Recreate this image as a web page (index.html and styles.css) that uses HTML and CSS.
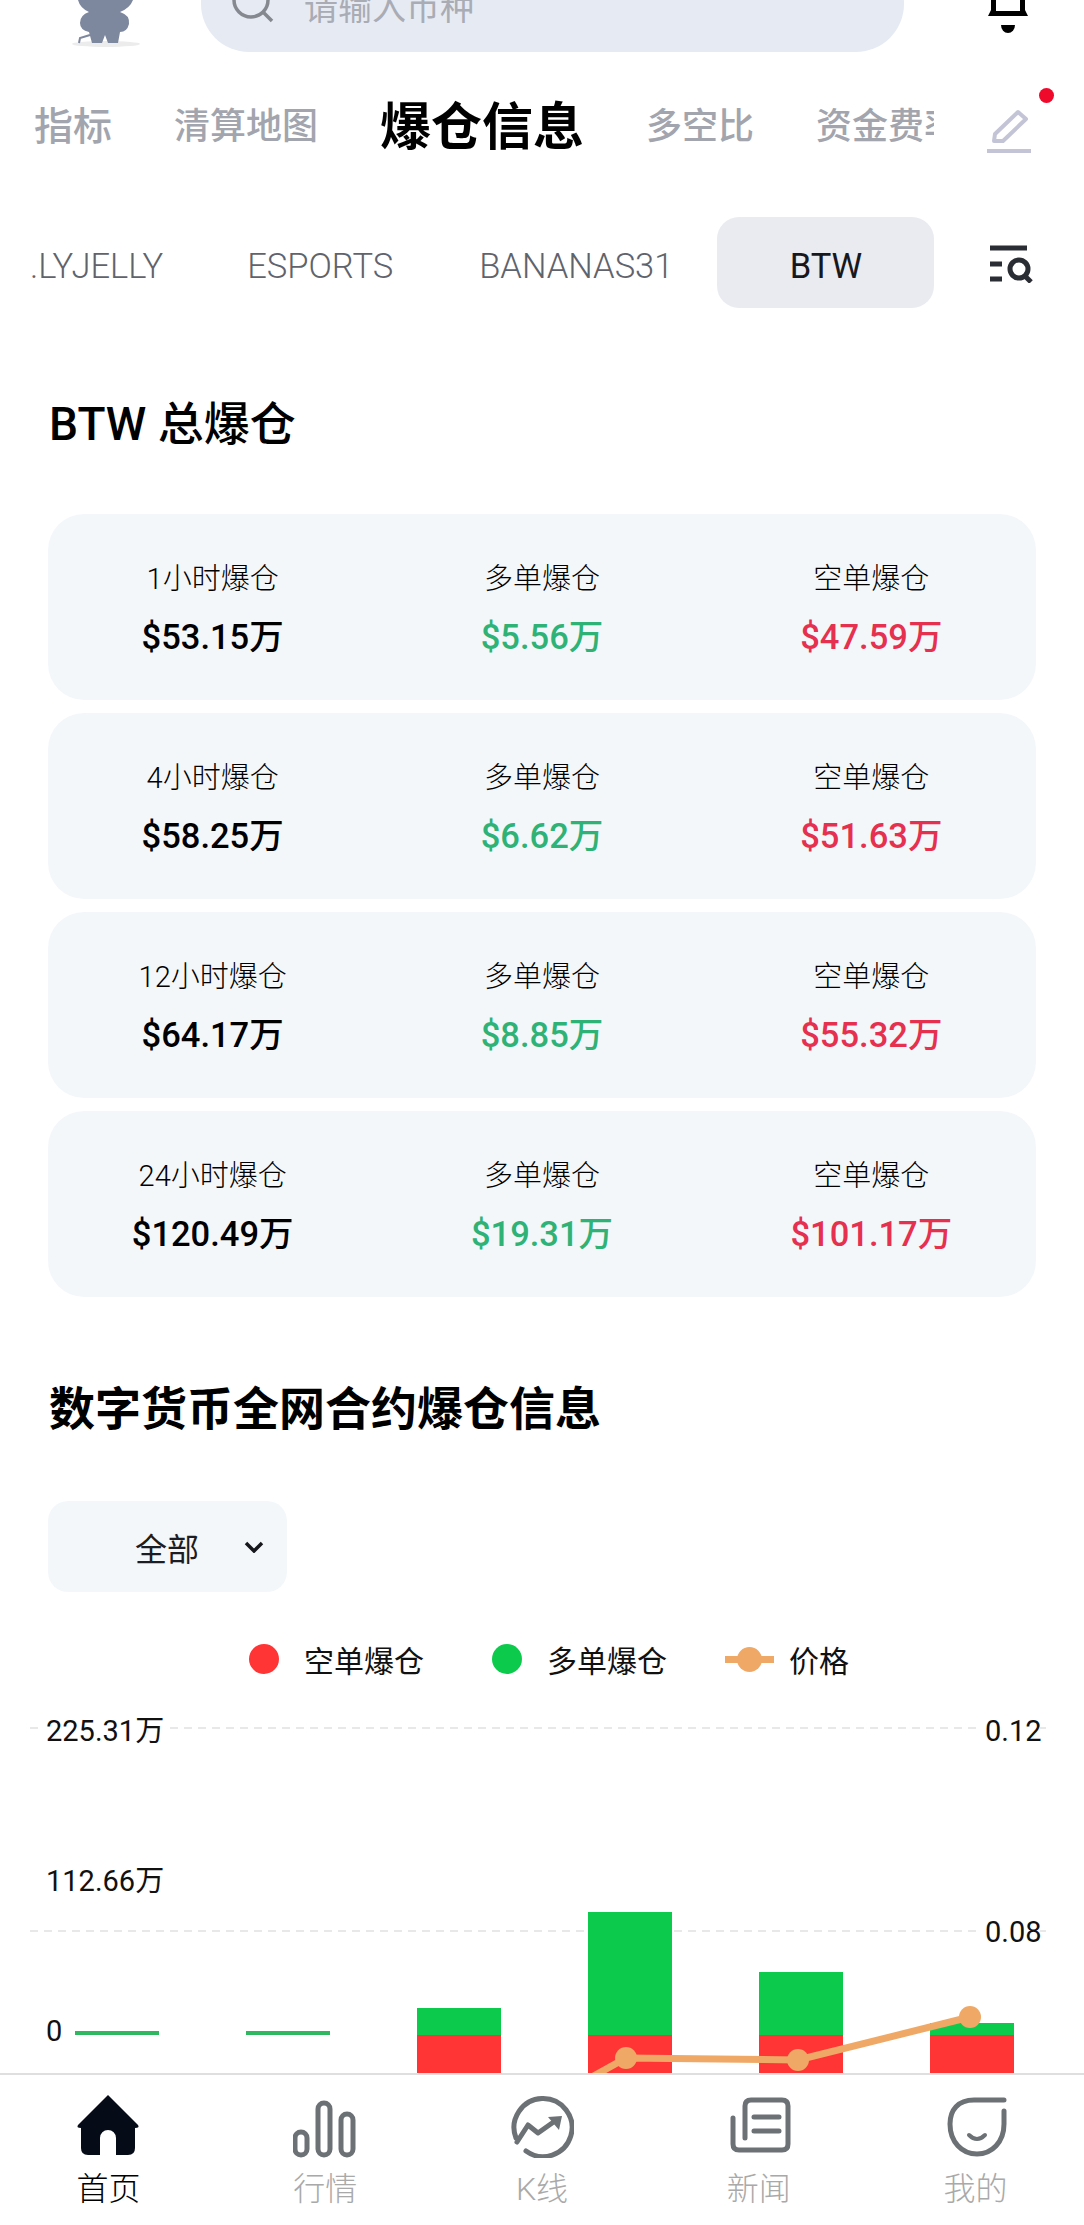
FILE: index.html
```html
<!DOCTYPE html>
<html lang="zh-CN">
<head>
    <meta charset="UTF-8">
    <meta name="viewport" content="width=device-width, initial-scale=1.0">
    <title>爆仓信息</title>
    <link rel="stylesheet" href="styles.css">
</head>
<body>
    <div class="page">
        <main class="content">
            <header class="top-bar">
                <svg class="mascot" width="84" height="52" viewBox="0 0 84 52">
                    <ellipse class="mascot-shadow" cx="40" cy="44" rx="34" ry="3"/>
                    <path class="mascot-body" d="M12 0H67Q64 8 54 12Q64 15 63 24Q61 32 54 32L52 43H42L39 35L36 43H26L23 32Q14 30 14 23Q14 15 23 12Q14 8 12 0Z"/>
                    <path class="mascot-tail" d="M24 35L14 38L13 43"/>
                </svg>
                <div class="search">
                    <svg class="search-icon" width="44" height="44" viewBox="0 0 44 44">
                        <circle cx="20" cy="20" r="17"/>
                        <path d="M32 32L41 41"/>
                    </svg>
                    <span class="search-text">请输入币种</span>
                </div>
                <svg class="bell" width="46" height="34" viewBox="0 0 46 34">
                    <path d="M6 0V10L3 16H43L40 10V0H35V11H11V0Z"/>
                    <path d="M16 25H30A7 8 0 0 1 16 25Z"/>
                </svg>
            </header>

            <nav class="tabs">
                <div class="tab-list">
                    <a class="tab">指标</a>
                    <a class="tab">清算地图</a>
                    <a class="tab tab-on">爆仓信息</a>
                    <a class="tab">多空比</a>
                    <a class="tab">资金费率</a>
                </div>
                <div class="pen">
                    <svg width="46" height="46" viewBox="0 0 46 46">
                        <path class="pen-body" d="M8 33L9 26L32 4L40 11L17 33Z"/>
                        <path class="pen-line" d="M1 43H45"/>
                    </svg>
                    <span class="red-dot"></span>
                </div>
            </nav>

            <div class="symbols">
                <div class="symbol-list">
                    <a class="symbol">.LYJELLY</a>
                    <a class="symbol">ESPORTS</a>
                    <a class="symbol">BANANAS31</a>
                    <a class="symbol symbol-on">BTW</a>
                </div>
                <svg class="filter" width="44" height="38" viewBox="0 0 44 38">
                    <path class="filter-line" d="M0 3H37M0 19H12M0 34H12"/>
                    <circle class="filter-lens" cx="29" cy="24" r="9"/>
                    <path class="filter-lens" d="M35 31L41 37"/>
                </svg>
            </div>

            <h2 class="title title-first">BTW 总爆仓</h2>

            <section class="cards">
                <div class="card">
                    <div class="cell"><span class="label">1小时爆仓</span><span class="value">$53.15万</span></div>
                    <div class="cell"><span class="label">多单爆仓</span><span class="value green">$5.56万</span></div>
                    <div class="cell"><span class="label">空单爆仓</span><span class="value red">$47.59万</span></div>
                </div>
                <div class="card">
                    <div class="cell"><span class="label">4小时爆仓</span><span class="value">$58.25万</span></div>
                    <div class="cell"><span class="label">多单爆仓</span><span class="value green">$6.62万</span></div>
                    <div class="cell"><span class="label">空单爆仓</span><span class="value red">$51.63万</span></div>
                </div>
                <div class="card">
                    <div class="cell"><span class="label">12小时爆仓</span><span class="value">$64.17万</span></div>
                    <div class="cell"><span class="label">多单爆仓</span><span class="value green">$8.85万</span></div>
                    <div class="cell"><span class="label">空单爆仓</span><span class="value red">$55.32万</span></div>
                </div>
                <div class="card">
                    <div class="cell"><span class="label">24小时爆仓</span><span class="value">$120.49万</span></div>
                    <div class="cell"><span class="label">多单爆仓</span><span class="value green">$19.31万</span></div>
                    <div class="cell"><span class="label">空单爆仓</span><span class="value red">$101.17万</span></div>
                </div>
            </section>

            <h2 class="title title-second">数字货币全网合约爆仓信息</h2>

            <div class="dropdown">
                <span class="dropdown-text">全部</span>
                <svg width="20" height="12" viewBox="0 0 20 12"><path d="M2 2L10 10L18 2"/></svg>
            </div>

            <div class="legend">
                <span class="legend-item"><i class="dot dot-red"></i>空单爆仓</span>
                <span class="legend-item"><i class="dot dot-green"></i>多单爆仓</span>
                <span class="legend-item legend-price"><i class="price-key"></i>价格</span>
            </div>

            <svg class="chart" width="1084" height="373" viewBox="0 1700 1084 373">
                <path class="grid" d="M30 1728H1052M30 1931H1052"/>

                <rect class="zero" x="75" y="2031" width="84" height="4"/>
                <rect class="zero" x="246" y="2031" width="84" height="4"/>

                <rect class="bar-red" x="417" y="2035" width="84" height="40"/>
                <rect class="bar-green" x="417" y="2008" width="84" height="27"/>
                <rect class="bar-red" x="588" y="2035" width="84" height="40"/>
                <rect class="bar-green" x="588" y="1912" width="84" height="123"/>
                <rect class="bar-red" x="759" y="2035" width="84" height="40"/>
                <rect class="bar-green" x="759" y="1972" width="84" height="63"/>
                <rect class="bar-red" x="930" y="2035" width="84" height="40"/>
                <rect class="bar-green" x="930" y="2023" width="84" height="12"/>

                <path class="price-line" d="M590 2078L626 2058L798 2060L970 2017"/>
                <circle class="price-dot" cx="626" cy="2058" r="11"/>
                <circle class="price-dot" cx="798" cy="2060" r="11"/>
                <circle class="price-dot" cx="970" cy="2017" r="11"/>

                <rect class="label-back" x="44" y="1712" width="122" height="34"/>
                <rect class="label-back" x="982" y="1712" width="58" height="34"/>
                <rect class="label-back" x="982" y="1914" width="58" height="36"/>
                <text class="axis" x="46" y="1741">225.31万</text>
                <text class="axis" x="46" y="1891">112.66万</text>
                <text class="axis" x="46" y="2041">0</text>
                <text class="axis" x="985" y="1741">0.12</text>
                <text class="axis" x="985" y="1942">0.08</text>
            </svg>
        </main>

        <footer class="bottom-nav">
            <a class="nav-item nav-on">
                <svg width="64" height="64" viewBox="0 0 64 64">
                    <path class="home" d="M32 1L62 31Q64 34 59 34V54Q59 61 52 61H40V44A8 8 0 0 0 24 44V61H12Q5 61 5 54V34Q0 34 2 31Z"/>
                </svg>
                <span>首页</span>
            </a>
            <a class="nav-item">
                <svg width="64" height="64" viewBox="0 0 64 64">
                    <rect class="stroke" x="2" y="38" width="12" height="23" rx="6"/>
                    <rect class="stroke" x="25" y="9" width="12" height="52" rx="6"/>
                    <rect class="stroke" x="48" y="20" width="12" height="41" rx="6"/>
                </svg>
                <span>行情</span>
            </a>
            <a class="nav-item">
                <svg width="64" height="64" viewBox="0 0 64 64">
                    <path class="stroke" d="M6 44A29 29 0 1 1 16 57"/>
                    <path class="stroke" d="M7 48L18 31L28 39L45 27"/>
                    <path class="fill" d="M38 23L52 22L49 36Z"/>
                </svg>
                <span>K线</span>
            </a>
            <a class="nav-item">
                <svg width="64" height="64" viewBox="0 0 64 64">
                    <path class="stroke" d="M6 24V50Q6 56 12 56H55Q61 56 61 50V12Q61 6 55 6H24Q18 6 18 12V44"/>
                    <path class="stroke" d="M27 23H52M27 37H52"/>
                </svg>
                <span>新闻</span>
            </a>
            <a class="nav-item">
                <svg width="64" height="64" viewBox="0 0 64 64">
                    <path class="stroke" d="M60 6H30C14 6 6 16 6 30C6 48 18 60 33 60C48 60 60 48 60 30V17"/>
                    <path class="smile" d="M25 41Q33 49 41 41"/>
                </svg>
                <span>我的</span>
            </a>
        </footer>
    </div>
</body>
</html>
```

FILE: styles.css
```css
* {
    box-sizing: border-box;
}
body {
    margin: 0;
    background: #fff;
    font-family: Roboto, "Noto Sans CJK SC", sans-serif;
    color: #000;
}
.page {
    width: 1084px;
    height: 2225px;
    display: flex;
    flex-direction: column;
    overflow: hidden;
}
.content {
    flex: 1;
    min-height: 0;
    overflow: hidden;
}

/* top bar, scrolled partly out of view */
.top-bar {
    height: 52px;
    display: flex;
    align-items: flex-end;
    position: relative;
}
.mascot {
    margin-left: 66px;
    flex: none;
}
.mascot-body {
    fill: #7d879d;
}
.mascot-tail {
    fill: none;
    stroke: #7d879d;
    stroke-width: 2;
}
.mascot-shadow {
    fill: #ececec;
}
.search {
    width: 703px;
    height: 100px;
    margin-left: 51px;
    padding-left: 30px;
    flex: none;
    display: flex;
    align-items: center;
    border-radius: 48px;
    background: #e6eaf3;
}
.search-icon {
    flex: none;
    fill: none;
    stroke: #85888f;
    stroke-width: 3.5;
}
.search-text {
    margin-left: 29px;
    padding-top: 6px;
    font-size: 34px;
    color: #a9acb4;
}
.bell {
    margin-left: 81px;
    margin-bottom: 18px;
    flex: none;
    fill: #000;
}

/* main tabs */
.tabs {
    height: 148px;
    display: flex;
    align-items: center;
}
.tab-list {
    width: 934px;
    margin-bottom: 6px;
    padding-left: 34px;
    display: flex;
    align-items: center;
    gap: 62px;
    overflow: hidden;
    flex: none;
}
.tab {
    flex: none;
    font-size: 36px;
    font-weight: 500;
    color: #a2a5ad;
    white-space: nowrap;
}
.tab:first-child {
    font-size: 39px;
}
.tab-on {
    font-size: 51px;
    font-weight: 700;
    color: #000;
}
.pen {
    position: relative;
    width: 46px;
    height: 46px;
    margin-left: 52px;
    margin-top: 10px;
}
.pen-body {
    fill: none;
    stroke: #c3c4d6;
    stroke-width: 4;
    stroke-linejoin: round;
}
.pen-line {
    fill: none;
    stroke: #c3c4d6;
    stroke-width: 4;
}
.red-dot {
    position: absolute;
    left: 53px;
    top: -20px;
    width: 15px;
    height: 15px;
    border-radius: 50%;
    background: #ef0a2c;
}

/* symbol strip */
.symbols {
    height: 108px;
    padding-top: 17px;
    display: flex;
}
.symbol-list {
    width: 904px;
    height: 91px;
    margin-left: 30px;
    display: flex;
    overflow: hidden;
    flex: none;
}
.symbol {
    flex: none;
    height: 91px;
    padding: 8px 43px 0;
    line-height: 83px;
    font-size: 34.5px;
    font-weight: 300;
    color: #5f636b;
}
.symbol:first-child {
    padding-left: 0;
    padding-right: 41px;
}
.symbol-on {
    width: 217px;
    margin-left: 1px;
    padding: 8px 0 0;
    text-align: center;
    border-radius: 22px;
    background: #e9ebf0;
    font-weight: 400;
    color: #16181d;
}
.filter {
    margin-left: 56px;
    margin-top: 28px;
    flex: none;
}
.filter-line {
    fill: none;
    stroke: #2a2d33;
    stroke-width: 5;
}
.filter-lens {
    fill: none;
    stroke: #2a2d33;
    stroke-width: 5;
}

.title {
    margin: 0 0 0 49px;
    font-size: 46px;
    font-weight: 500;
    line-height: 60px;
}
.title-first {
    margin-top: 86px;
}
.title-second {
    margin-top: 82px;
    font-weight: 700;
}

/* liquidation cards */
.cards {
    margin: 60px 48px 0;
    display: flex;
    flex-direction: column;
    gap: 13px;
}
.card {
    height: 186px;
    display: grid;
    grid-template-columns: repeat(3, 1fr);
    border-radius: 36px;
    background: #f4f7fa;
}
.cell {
    display: flex;
    flex-direction: column;
    align-items: center;
    padding-top: 45px;
}
.label {
    font-size: 29px;
    line-height: 40px;
    font-weight: 300;
    color: #000;
}
.value {
    margin-top: 18px;
    font-size: 34.5px;
    font-weight: 500;
    line-height: 40px;
}
.green {
    color: #2fb276;
}
.red {
    color: #e6304f;
}

.dropdown {
    width: 239px;
    height: 91px;
    margin: 62px 0 0 48px;
    padding-left: 87px;
    display: flex;
    align-items: center;
    border-radius: 20px;
    background: #f4f7fa;
}
.dropdown-text {
    font-size: 32px;
    color: #1b1d22;
}
.dropdown svg {
    margin-left: 45px;
    fill: none;
    stroke: #15171c;
    stroke-width: 3.5;
}

.legend {
    height: 40px;
    margin-top: 47px;
    display: flex;
    align-items: center;
    font-size: 30px;
    color: #111;
}
.legend-item {
    display: flex;
    align-items: center;
}
.dot {
    width: 30px;
    height: 30px;
    margin-right: 25px;
    border-radius: 50%;
}
.dot-red {
    margin-left: 249px;
    background: #ff3434;
}
.dot-green {
    margin-left: 68px;
    background: #0ccb4c;
}
.price-key {
    position: relative;
    width: 49px;
    height: 7px;
    margin-left: 58px;
    margin-right: 15px;
    background: #f0a866;
}
.price-key::after {
    content: "";
    position: absolute;
    left: 12px;
    top: -9px;
    width: 25px;
    height: 25px;
    border-radius: 50%;
    background: #f0a866;
}

.chart {
    display: block;
    margin-top: 21px;
}
.grid {
    fill: none;
    stroke: #e8e8e8;
    stroke-width: 2;
    stroke-dasharray: 8 6;
}
.zero {
    fill: #2fb860;
}
.bar-red {
    fill: #ff3434;
}
.bar-green {
    fill: #0ccb4c;
}
.price-line {
    fill: none;
    stroke: #f0a866;
    stroke-width: 7;
}
.price-dot {
    fill: #f0a866;
}
.label-back {
    fill: #fff;
}
.axis {
    font-size: 29px;
    fill: #111;
}

/* bottom navigation */
.bottom-nav {
    height: 152px;
    flex: none;
    display: grid;
    grid-template-columns: repeat(5, 1fr);
    border-top: 2px solid #dfdfdf;
    background: #fff;
}
.nav-item {
    padding-top: 19px;
    display: flex;
    flex-direction: column;
    align-items: center;
    font-size: 32px;
    line-height: 40px;
    font-weight: 300;
    color: #a9a9a9;
}
.nav-item span {
    margin-top: 11px;
}
.nav-on {
    color: #000;
}
.home {
    fill: #060b18;
}
.stroke {
    fill: none;
    stroke: #6c7176;
    stroke-width: 5;
    stroke-linecap: round;
    stroke-linejoin: round;
}
.fill {
    fill: #6c7176;
}
.smile {
    fill: none;
    stroke: #6c7176;
    stroke-width: 4;
    stroke-linecap: round;
}
```
